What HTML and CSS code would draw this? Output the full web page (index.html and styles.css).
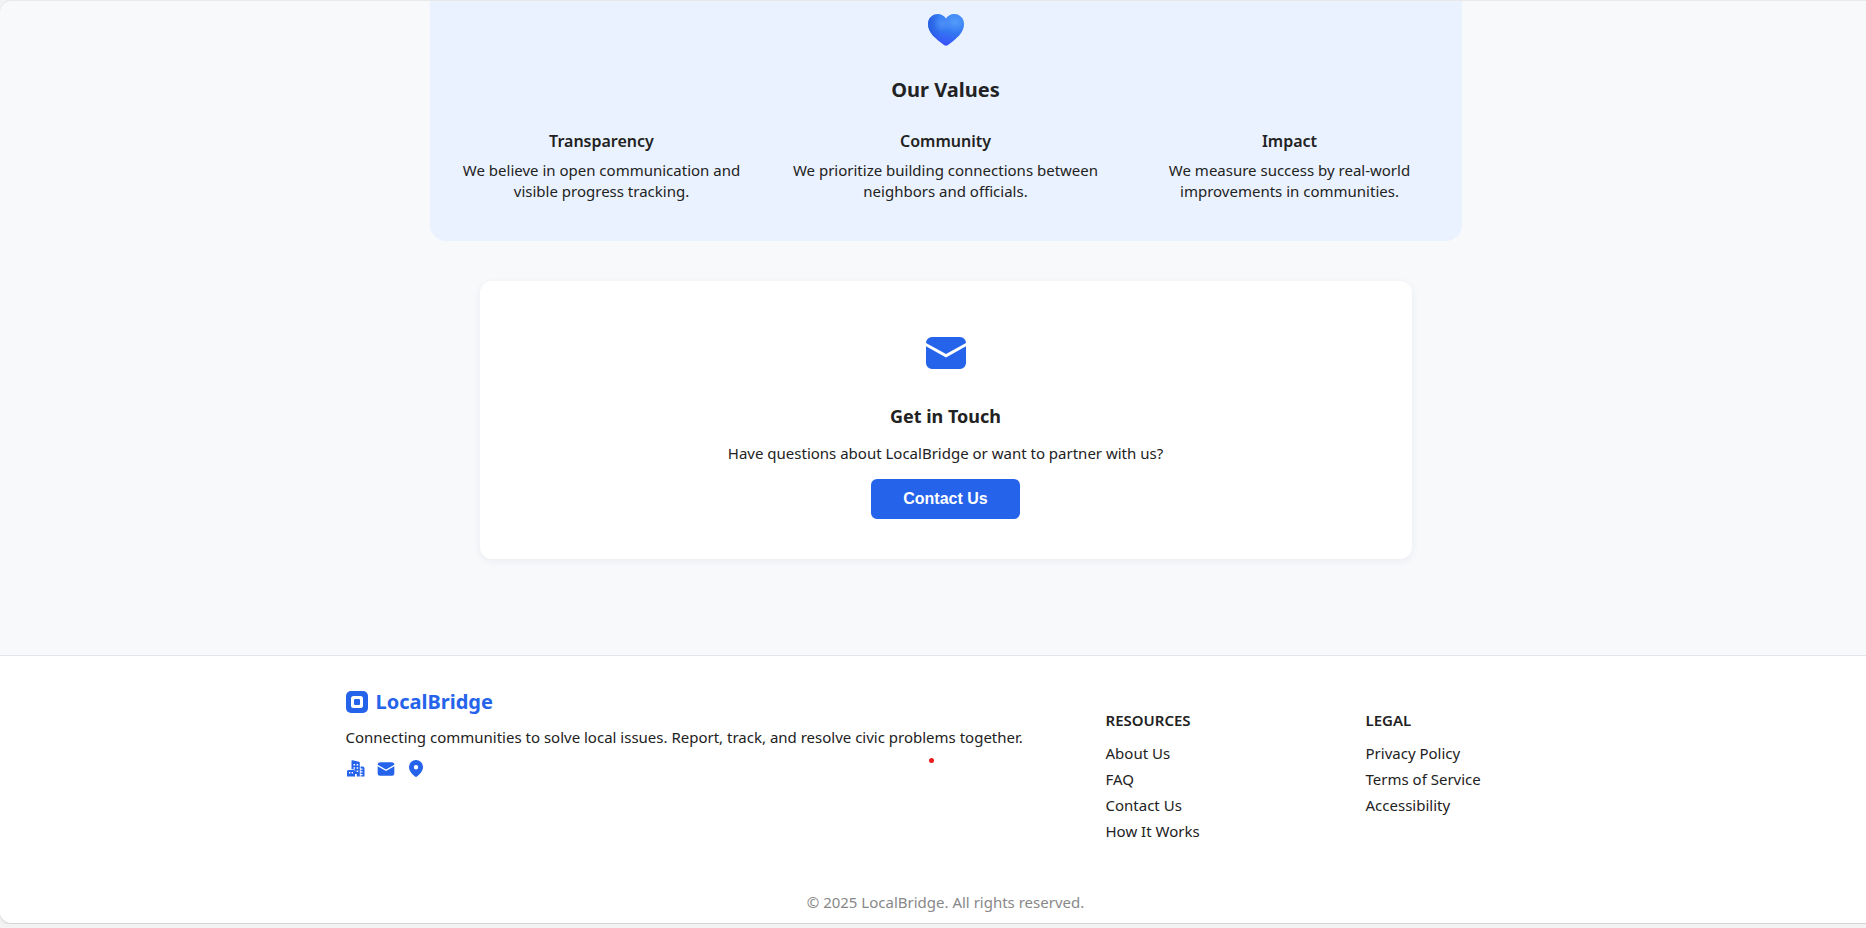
FILE: index.html
```html
<!DOCTYPE html>
<html lang="en">
<head>
<meta charset="utf-8">
<meta name="viewport" content="width=device-width, initial-scale=1">
<title>LocalBridge</title>
<link rel="stylesheet" href="styles.css">
</head>
<body>
<svg width="0" height="0" class="defs" aria-hidden="true">
  <symbol id="mail" viewBox="0 0 24 24">
    <path fill="currentColor" d="M2 8.6 12 14.3 22 8.6V17a3 3 0 0 1-3 3H5a3 3 0 0 1-3-3zM5 4h14a3 3 0 0 1 3 3L12 12.500 2 7a3 3 0 0 1 3-3z"/>
  </symbol>
</svg>
<div class="page">
  <main class="content">
    <section class="values">
      <svg class="heart" viewBox="0 0 36 32" role="img" aria-label="Blue heart">
        <defs>
          <linearGradient id="base" x1="0.6" y1="0" x2="0.35" y2="1">
            <stop offset="0" stop-color="#3b85f6"/><stop offset="0.55" stop-color="#3377f2"/><stop offset="1" stop-color="#3a4dfb"/>
          </linearGradient>
          <radialGradient id="glow" cx="0.75" cy="0.25" r="0.35">
            <stop offset="0" stop-color="#559bfa"/><stop offset="1" stop-color="#559bfa" stop-opacity="0"/>
          </radialGradient>
          <radialGradient id="lobe" cx="0.4" cy="0.3" r="0.25">
            <stop offset="0" stop-color="#4f8ff6"/><stop offset="1" stop-color="#4f8ff6" stop-opacity="0"/>
          </radialGradient>
          <linearGradient id="edge" x1="0" x2="1">
            <stop offset="0" stop-color="#2456dc" stop-opacity="0.8"/><stop offset="0.35" stop-color="#2456dc" stop-opacity="0"/>
          </linearGradient>
          <path id="heart-shape" d="M18 4.500C16 1.500 13 0 9.800 0 4.300 0 0 4.400 0 10c0 9 8 15 16 21q2 1.500 4 0C28 25 36 19 36 10 36 4.400 31.700 0 26.200 0 23 0 20 1.500 18 4.500z"/>
        </defs>
        <use href="#heart-shape" fill="url(#base)"/>
        <use href="#heart-shape" fill="url(#edge)"/>
        <use href="#heart-shape" fill="url(#glow)"/>
        <use href="#heart-shape" fill="url(#lobe)"/>
      </svg>
      <h2 class="values-title">Our Values</h2>
      <div class="values-grid">
        <div><h3>Transparency</h3><p>We believe in open communication and visible progress tracking.</p></div>
        <div><h3>Community</h3><p>We prioritize building connections between neighbors and officials.</p></div>
        <div><h3>Impact</h3><p>We measure success by real-world improvements in communities.</p></div>
      </div>
    </section>
    <section class="contact">
      <svg class="contact-icon" aria-hidden="true"><use href="#mail"/></svg>
      <h2 class="contact-title">Get in Touch</h2>
      <p>Have questions about LocalBridge or want to partner with us?</p>
      <button class="button" type="button">Contact Us</button>
    </section>
  </main>
  <footer class="footer">
    <div class="footer-grid">
      <div class="brand">
        <div class="logo">
          <svg class="logo-mark" viewBox="0 0 22 22" aria-hidden="true">
            <rect width="22" height="22" rx="5" fill="currentColor"/>
            <rect x="5" y="5" width="12" height="12" rx="2.500" fill="#fff"/>
            <rect x="8" y="8" width="6" height="6" rx="1" fill="currentColor"/>
          </svg>
          <span>LocalBridge</span>
        </div>
        <p>Connecting communities to solve local issues. Report, track, and resolve civic problems together.</p>
        <div class="social">
          <a href="#" aria-label="City"><svg viewBox="0 0 20 20" aria-hidden="true">
            <path fill="currentColor" fill-rule="evenodd" d="M5.500 17.500V2q0-1 1-.8L13 2.800q.8.200.8 1V17.500h-3v-2.500h-2v2.500zM7.500 5h1.600v1.600H7.500zM10.600 5h1.600v1.600h-1.600zM7.500 8.200h1.600v1.600H7.500zM10.600 8.200h1.600v1.600h-1.600zM7.500 11.400h1.600V13H7.500zM10.600 11.400h1.600V13h-1.600z"/>
            <path fill="#fff" d="M.5 10.300h8v8h-8z"/>
            <path fill="currentColor" fill-rule="evenodd" d="M2.500 11h5q1.500 0 1.500 1.500v5H1v-5Q1 11 2.500 11zM3 13h1.300v1.500H3zM5.700 13H7v1.500H5.700z"/>
            <path fill="currentColor" fill-rule="evenodd" d="M14.600 7.500h1.900q2 0 2 2v8h-3.900v-1.300h1.900v-1.200h-1.900v-1.500h1.900v-1.200h-1.900v-1.500h1.900V9.600h-1.900z"/>
          </svg></a>
          <a href="#" aria-label="Email"><svg aria-hidden="true"><use href="#mail"/></svg></a>
          <a href="#" aria-label="Location"><svg viewBox="0 0 20 20" aria-hidden="true">
            <path fill="currentColor" fill-rule="evenodd" d="M10 1a7 7 0 0 1 7 7c0 4-3 7-6 9.500q-1 .8-2 0C6 15 3 12 3 8a7 7 0 0 1 7-7zM10 6a2.200 2.200 0 1 0 0 4.400A2.200 2.200 0 0 0 10 6z"/>
          </svg></a>
        </div>
        <span class="pointer"></span>
      </div>
      <nav class="links" aria-labelledby="res">
        <h4 id="res">RESOURCES</h4>
        <a href="#">About Us</a><a href="#">FAQ</a><a href="#">Contact Us</a><a href="#">How It Works</a>
      </nav>
      <nav class="links" aria-labelledby="legal">
        <h4 id="legal">LEGAL</h4>
        <a href="#">Privacy Policy</a><a href="#">Terms of Service</a><a href="#">Accessibility</a>
      </nav>
    </div>
    <p class="copyright">© 2025 LocalBridge. All rights reserved.</p>
  </footer>
</div>
</body>
</html>
```
FILE: styles.css
```css
* { box-sizing: border-box; }
body {
  margin: 0;
  overflow-x: hidden;
  background: #f3f3f3;
  color: #222;
  font: 15px/21px "Segoe UI", "Noto Sans", "Open Sans", sans-serif;
}
h2, h3, h4, p { margin: 0; }
a { color: inherit; text-decoration: none; }
.defs { position: absolute; }
.page {
  width: calc(100% + 25px);
  overflow: hidden;
  background: #f8f9fb;
  border-top: 1px solid #e9e9ea;
  border-bottom: 1px solid #d4d4d4;
  border-radius: 12px;
  box-shadow: 0 1px 3px rgba(0, 0, 0, .1);
}
.content {
  display: flex;
  flex-direction: column;
  align-items: center;
  gap: 40px;
  padding-bottom: 96px;
}
.values {
  width: 100%;
  max-width: 1032px;
  padding: 13px 16px 39px;
  border-radius: 0 0 16px 16px;
  background: #eaf2ff;
  text-align: center;
}
.heart { display: block; width: 36px; height: 32px; margin: 0 auto; }
.values-title { margin-top: 29px; font-size: 20px; line-height: 30px; }
.values-grid {
  display: grid;
  grid-template-columns: repeat(3, 1fr);
  gap: 32px;
  margin-top: 23px;
}
.values-grid h3 { margin-bottom: 5px; font-size: 16px; line-height: 27px; font-weight: 600; }
.contact {
  display: flex;
  flex-direction: column;
  align-items: center;
  width: 100%;
  max-width: 932px;
  padding: 48px 32px 40px;
  border-radius: 12px;
  background: #fff;
  box-shadow: 0 2px 8px rgba(30, 41, 90, .06);
}
.contact-icon { width: 48px; height: 48px; color: #2563eb; }
.contact-title { margin: 26px 0 14px; font-size: 18px; line-height: 26px; }
.button {
  margin-top: 15px;
  padding: 11px 32px;
  border: 0;
  border-radius: 6px;
  background: #2563eb;
  color: #fff;
  font: bold 16px/18px "Liberation Sans", Arial, sans-serif;
}
.footer {
  padding: 32px 24px 10px;
  border-top: 1px solid #e2e5ec;
  background: #fff;
}
.footer-grid {
  display: grid;
  grid-template-columns: 1fr 180px 180px;
  gap: 80px;
  max-width: 1200px;
  margin: 0 auto;
}
.brand { position: relative; }
.logo { display: flex; align-items: center; gap: 8px; margin-bottom: 11px; color: #2563eb; font-size: 20px; font-weight: 700; line-height: 28px; }
.logo-mark { width: 22px; height: 22px; }
.social { display: flex; gap: 10px; margin-top: 11px; color: #2563eb; }
.social svg { display: block; width: 20px; height: 20px; }
.pointer {
  position: absolute;
  left: 583px;
  top: 70px;
  width: 5px;
  height: 5px;
  border-radius: 50%;
  background: #ec1c1c;
}
.links { display: flex; flex-direction: column; align-items: flex-start; gap: 5px; padding-top: 22px; }
.links h4 { margin-bottom: 7px; font-size: 15px; font-weight: 600; }
.copyright { margin-top: 50px; color: #888; text-align: center; }
```
